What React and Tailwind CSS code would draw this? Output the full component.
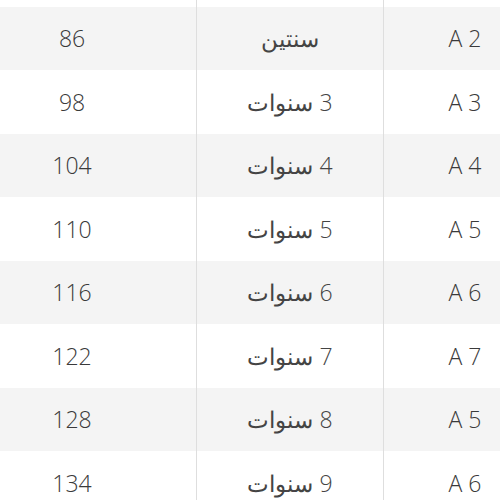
const rows = [
  { code: "A 2", age: "سنتين", size: "86" },
  { code: "A 3", age: "3 سنوات", size: "98" },
  { code: "A 4", age: "4 سنوات", size: "104" },
  { code: "A 5", age: "5 سنوات", size: "110" },
  { code: "A 6", age: "6 سنوات", size: "116" },
  { code: "A 7", age: "7 سنوات", size: "122" },
  { code: "A 5", age: "8 سنوات", size: "128" },
  { code: "A 6", age: "9 سنوات", size: "134" },
];

function Row({ code, age, size, gray, h }) {
  return (
    <div className={`flex ${gray ? "bg-[#f4f4f4]" : "bg-white"}`} style={{ height: h }}>
      <div className="w-[162px] flex items-center justify-center">{code}</div>
      <div className="w-[188px] flex items-center justify-center border-x border-[#dedede] text-[#444]">
        {age}
      </div>
      <div className="w-[248px] flex items-center justify-center">{size}</div>
    </div>
  );
}

export default function App() {
  return (
    <div className="w-[500px] h-[500px] overflow-hidden bg-white">
      <div
        dir="rtl"
        className="w-[598px] ml-[-52px] text-[23px] font-light text-[#3a3a3a] font-['Open_Sans','DejaVu_Sans',sans-serif]"
      >
        <Row code="" age="" size="" gray={false} h={7} />
        {rows.map((r, i) => (
          <Row key={i} {...r} gray={i % 2 === 0} h={i % 2 === 0 ? 63 : 64} />
        ))}
      </div>
    </div>
  );
}
